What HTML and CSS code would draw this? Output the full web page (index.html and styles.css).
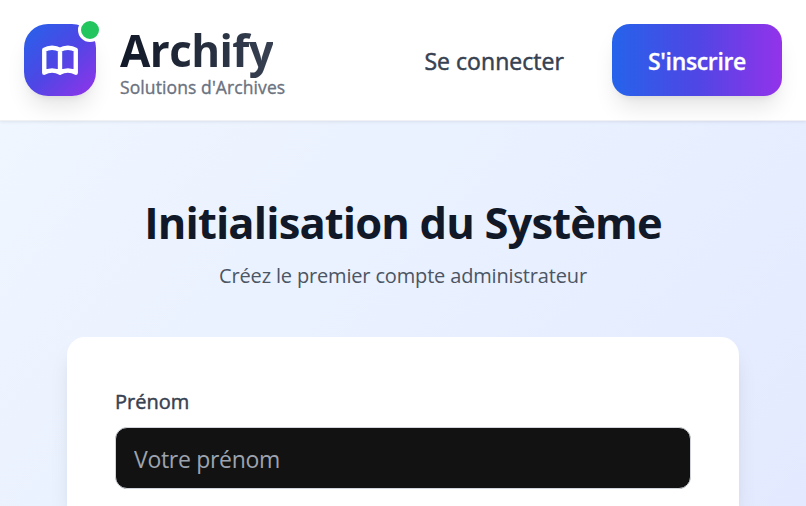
FILE: index.html
```html
<!DOCTYPE html>
<html lang="fr">
<head>
<meta charset="utf-8">
<title>Archify</title>
<link rel="stylesheet" href="styles.css">
</head>
<body>
<header class="header">
  <a class="brand">
    <span class="logo">
      <svg class="logo-icon" viewBox="0 0 24 24" fill="none" stroke="currentColor" stroke-width="2.5" stroke-linecap="round" stroke-linejoin="round"><path d="M12 6.253v13m0-13C10.832 5.477 9.246 5 7.5 5S4.168 5.477 3 6.253v13C4.168 18.477 5.754 18 7.5 18s3.332.477 4.5 1.253m0-13C13.168 5.477 14.754 5 16.5 5c1.747 0 3.332.477 4.5 1.253v13C19.832 18.477 18.247 18 16.5 18c-1.746 0-3.332.477-4.5 1.253"/></svg>
      <span class="status"></span>
    </span>
    <span class="brand-text">
      <span class="name">Archify</span>
      <span class="tagline">Solutions d'Archives</span>
    </span>
  </a>
  <nav class="nav">
    <a class="login">Se connecter</a>
    <a class="signup">S'inscrire</a>
  </nav>
</header>
<main class="main">
  <h1 class="title">Initialisation du Système</h1>
  <p class="subtitle">Créez le premier compte administrateur</p>
  <form class="card">
    <label class="label" for="prenom">Prénom</label>
    <input class="input" id="prenom" type="text" placeholder="Votre prénom">
  </form>
</main>
</body>
</html>
```
FILE: styles.css
```css
* { box-sizing: border-box; }
body {
  margin: 0;
  height: 506px;
  overflow: hidden;
  display: flex;
  flex-direction: column;
  font-family: "Open Sans", "Noto Sans", sans-serif;
  background: #fff;
}
.header {
  flex: none;
  height: 121px;
  padding: 0 24px;
  display: flex;
  align-items: center;
  justify-content: space-between;
  background: #fff;
  border-bottom: 1px solid #f0f1f4;
  box-shadow: 0 1px 3px rgba(0, 0, 0, .08);
  position: relative;
}
.brand { display: flex; align-items: center; gap: 24px; }
.logo {
  position: relative;
  width: 72px;
  height: 72px;
  border-radius: 24px;
  display: flex;
  align-items: center;
  justify-content: center;
  color: #fff;
  background: linear-gradient(to bottom right, #2563eb, #4f46e5, #9333ea);
  box-shadow: 0 15px 22px -4px rgba(0, 0, 0, .1), 0 6px 9px -6px rgba(0, 0, 0, .1);
}
.logo-icon { width: 42px; height: 42px; }
.status {
  position: absolute;
  top: -6px;
  right: -6px;
  width: 24px;
  height: 24px;
  border-radius: 50%;
  border: 3px solid #fff;
  background: #22c55e;
}
.brand-text { display: flex; flex-direction: column; align-items: flex-start; }
.name {
  padding-bottom: 2px;
  font-size: 44px;
  line-height: 52px;
  font-weight: 700;
  letter-spacing: -.6px;
  color: transparent;
  background: linear-gradient(to right, #111827, #374151);
  background-clip: text;
}
.tagline {
  font-size: 17.5px;
  line-height: 18px;
  letter-spacing: .1px;
  color: #6b7280;
  -webkit-text-stroke: .35px #6b7280;
}
.nav { display: flex; align-items: center; gap: 48px; font-size: 23px; }
.login { padding-top: 1px; color: #374151; letter-spacing: .05px; -webkit-text-stroke: .5px #374151; }
.signup {
  width: 170px;
  height: 72px;
  padding-top: 2px;
  display: flex;
  align-items: center;
  justify-content: center;
  border-radius: 18px;
  font-weight: 600;
  letter-spacing: -.35px;
  color: #fff;
  -webkit-text-stroke: .3px #fff;
  background: linear-gradient(to right, #2563eb, #4f46e5, #9333ea);
  box-shadow: 0 15px 22px -4px rgba(0, 0, 0, .1), 0 6px 9px -6px rgba(0, 0, 0, .1);
}
.main {
  flex: 1;
  min-height: 0;
  padding: 72px 67px 0;
  display: flex;
  flex-direction: column;
  text-align: center;
  background: linear-gradient(130deg, #eff6ff, #e0e7ff 125%);
}
.title { margin: 0; font-size: 43.5px; line-height: 60px; font-weight: 700; letter-spacing: -.85px; color: #111827; }
.subtitle { margin: 8px 0 0; font-size: 20px; line-height: 30px; letter-spacing: -.16px; color: #4b5563; }
.card {
  flex: 1;
  margin-top: 46px;
  padding: 50px 48px 0;
  text-align: left;
  background: #fff;
  border-radius: 18px 18px 0 0;
  box-shadow: 0 15px 22px -4px rgba(0, 0, 0, .1), 0 6px 9px -6px rgba(0, 0, 0, .1);
}
.label {
  display: block;
  margin-bottom: 10px;
  font-size: 20px;
  line-height: 30px;
  color: #374151;
  -webkit-text-stroke: .45px #374151;
}
.input {
  display: block;
  width: 576px;
  height: 62px;
  padding: 1px 18px 0;
  border: 1px solid #d1d5db;
  border-radius: 12px;
  background: #121212;
  font: 400 23px "Open Sans", "Noto Sans", sans-serif;
  letter-spacing: -.3px;
}
.input::placeholder { color: #9ca3af; opacity: 1; }
```
